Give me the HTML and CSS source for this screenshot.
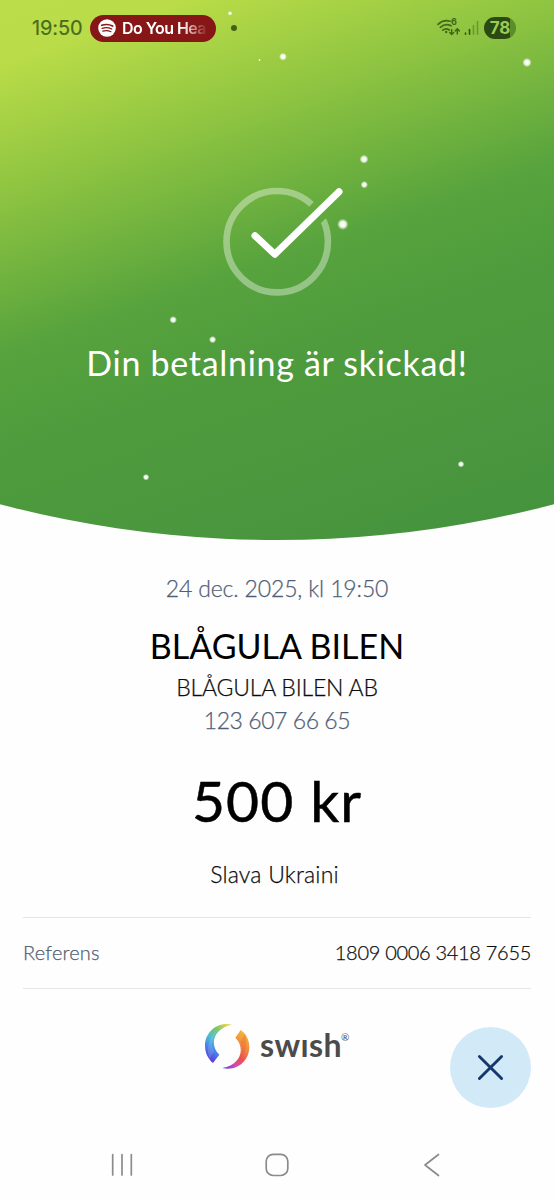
FILE: index.html
```html
<!DOCTYPE html>
<html lang="sv">
<head>
<meta charset="utf-8">
<title>Swish</title>
<link rel="stylesheet" href="styles.css">
</head>
<body>
<main class="screen">
  <section class="hero">
    <svg class="sparkles" viewBox="0 0 554 540" aria-hidden="true">
      <defs><radialGradient id="glow"><stop offset="0" stop-color="#fff"/><stop offset=".5" stop-color="#fff" stop-opacity=".9"/><stop offset="1" stop-color="#fff" stop-opacity="0"/></radialGradient></defs>
      <g fill="url(#glow)">
        <circle cx="230" cy="13.300" r="2.300"/><circle cx="259.500" cy="60" r="1.300"/><circle cx="283" cy="56.700" r="4"/>
        <circle cx="527" cy="62.500" r="4.700"/><circle cx="364" cy="159.200" r="4.500"/><circle cx="364.300" cy="184.700" r="3.700"/>
        <circle cx="342.800" cy="224.300" r="5.700"/><circle cx="173.200" cy="319.800" r="3.800"/><circle cx="212.600" cy="339.600" r="3.700"/>
        <circle cx="146" cy="477.200" r="3.300"/><circle cx="461" cy="464.200" r="3.300"/>
      </g>
    </svg>
    <header class="status">
      <span class="clock">19:50</span>
      <div class="pill">
        <svg class="spotify" viewBox="0 0 18 18"><circle cx="9" cy="9" r="8.800" fill="#fff"/><g fill="none" stroke="#8a1616" stroke-linecap="round"><path d="M3.700 6.300Q9.500 4.400 14.600 7" stroke-width="1.700"/><path d="M4.200 9.300Q9.200 7.700 13.700 10" stroke-width="1.400"/><path d="M4.700 12.100Q9 10.800 12.900 12.700" stroke-width="1.200"/></g></svg>
        <span class="track">Do You Hea</span>
      </div>
      <i class="dot"></i>
      <div class="signals">
        <svg class="wifi" viewBox="0 0 24 20"><g fill="none" stroke="#41671b" stroke-width="1.700" stroke-linecap="round"><path d="M1 6.300Q6.500 1.200 13 3.200"/><path d="M3.300 9.300Q8.500 5 14 7.800"/><path d="M5.800 12.200Q9 9.700 12.300 12"/><path d="M14.700 11.500V16.200M12.700 14.500L14.700 16.500L16.700 14.500M20.300 16V11.200M18.300 12.900L20.300 10.900L22.300 12.900" stroke-width="1.500"/></g><circle cx="9.200" cy="14" r="1.200" fill="#41671b"/></svg>
        <b class="six">6</b>
        <svg class="bars" viewBox="0 0 16 16"><g stroke-width="1.600" stroke-linecap="round"><path d="M1.500 13V14.300M5.500 9.500V14.300" stroke="#31550f"/><path d="M9.500 5.500V14.300M13.500 1.500V14.300" stroke="#31550f" opacity=".4"/></g></svg>
        <span class="battery">78</span>
      </div>
    </header>
    <svg class="check" viewBox="217 180 130 120">
      <defs><mask id="gap" maskUnits="userSpaceOnUse" x="217" y="180" width="130" height="120"><rect x="217" y="180" width="130" height="120" fill="#fff"/><path d="M274.700 253.600L346 185" stroke="#000" stroke-width="20"/></mask></defs>
      <circle cx="277.200" cy="241.700" r="50.700" fill="none" stroke="#fff" stroke-opacity=".38" stroke-width="6.600" mask="url(#gap)"/>
      <path d="M255 235.700L274.800 254.200L339 191.800" fill="none" stroke="#fff" stroke-width="7" stroke-linecap="round" stroke-linejoin="round"/>
    </svg>
    <h1 class="headline">Din betalning är skickad!</h1>
  </section>
  <section class="details">
    <p class="date">24 dec. 2025, kl 19:50</p>
    <h2 class="name">BLÅGULA BILEN</h2>
    <p class="company">BLÅGULA BILEN AB</p>
    <p class="number">123 607 66 65</p>
    <p class="amount">500 kr</p>
    <p class="message">Slava Ukraini</p>
    <div class="reference"><span class="label">Referens</span><span class="value">1809 0006 3418 7655</span></div>
  </section>
  <footer class="footer">
    <div class="brand">
      <svg class="mark" viewBox="42 38 138 138">
        <defs>
          <linearGradient id="cool" x1=".75" y1="0" x2=".25" y2="1"><stop offset="0" stop-color="#e3d24b"/><stop offset=".22" stop-color="#79c76c"/><stop offset=".5" stop-color="#4dbbd8"/><stop offset=".75" stop-color="#4a7bea"/><stop offset="1" stop-color="#5d35d8"/></linearGradient>
          <linearGradient id="warm" x1=".7" y1="0" x2=".2" y2="1"><stop offset="0" stop-color="#f3b73c"/><stop offset=".35" stop-color="#f18640"/><stop offset=".6" stop-color="#ea5350"/><stop offset=".82" stop-color="#d04bb8"/><stop offset="1" stop-color="#7a45d8"/></linearGradient>
        </defs>
        <path d="M126 43C82 32 45 65 45 106C45 127 54 145 69 158L88 133C58 105 68 54 126 43Z" fill="url(#cool)"/>
        <path d="M126 43C83 48 54 84 72 121L59 147C43 103 68 45 126 43Z" fill="#fff" opacity=".12"/>
        <path d="M97 173C141 184 178 151 178 110C178 89 169 71 152 59L136 82C166 111 155 163 97 173Z" fill="url(#warm)"/>
        <path d="M97 173C141 168 169 132 151 95L164 70C180 113 155 171 97 173Z" fill="#e5373f" opacity=".2"/>
      </svg>
      <span class="wordmark">swısh</span><sup class="reg">®</sup>
    </div>
    <button class="close" aria-label="Stäng"><svg viewBox="0 0 28 28"><path d="M2.500 2.500L25.500 25.500M25.500 2.500L2.500 25.500" stroke="#14386c" stroke-width="3" stroke-linecap="round"/></svg></button>
  </footer>
  <nav class="nav">
    <svg viewBox="0 0 24 24"><path d="M2.700 1.500V22M12 1.500V22M21.300 1.500V22"/></svg>
    <svg viewBox="0 0 24 24"><rect x="1.200" y="1.300" width="21.600" height="21.200" rx="7"/></svg>
    <svg viewBox="0 0 24 24"><path d="M18.500 1.500L5 12L18.500 22.500"/></svg>
  </nav>
</main>
</body>
</html>
```
FILE: styles.css
```css
* { box-sizing: border-box; }
body { margin: 0; background: #fefefe; font-family: Lato, "Liberation Sans", sans-serif; }
h1, h2, p { margin: 0; font-weight: 400; text-align: center; white-space: nowrap; }
svg { display: block; flex: none; }
.screen { width: 554px; height: 1200px; overflow: hidden; display: flex; flex-direction: column; }
.hero {
  position: relative; flex: none; height: 540px;
  background: linear-gradient(161deg, #bbdd4a 0, #b9dc48 62px, #8ec441 185px, #57a33d 335px, #4f9c3d 420px, #45923f 691px);
  clip-path: circle(1092px at 50% -552px);
}
.sparkles { position: absolute; inset: 0; width: 554px; height: 540px; }
.status { height: 56px; padding: 0 38px 0 32px; display: flex; align-items: center; font-family: Inter, Roboto, sans-serif; color: #4a6b1c; }
.clock { width: 58px; font-size: 20px; letter-spacing: -.1px; -webkit-text-stroke: .2px currentColor; white-space: nowrap; }
.pill { width: 126px; height: 27px; border-radius: 14px; background: #871616; display: flex; align-items: center; padding: 0 10px 0 8px; }
.spotify { width: 18px; height: 18px; margin-right: 6px; }
.track { white-space: nowrap; font-size: 16px; letter-spacing: -.55px; font-weight: 600; color: #fff; -webkit-mask-image: linear-gradient(90deg, #000 60px, transparent 86px); mask-image: linear-gradient(90deg, #000 60px, transparent 86px); }
.dot { width: 6px; height: 6px; border-radius: 50%; background: #426317; margin-left: 15px; }
.signals { margin-left: auto; display: flex; align-items: center; position: relative; }
.wifi { width: 24px; height: 20px; margin-right: 3px; }
.six { position: absolute; left: 14px; top: 0; font-size: 9px; line-height: 10px; font-weight: 700; color: #41671b; }
.bars { width: 16px; height: 16px; margin-right: 4px; }
.battery { width: 32px; height: 22px; border-radius: 11px; background: linear-gradient(90deg, #2b4a12 26px, #5a8d2b 26px); color: #9ccb57; font-size: 17px; font-weight: 700; line-height: 22px; text-align: center; }
.check { width: 130px; height: 120px; margin: 124px 0 0 217px; }
.headline { margin-top: 41px; font-size: 34px; line-height: 44px; letter-spacing: .7px; color: #fff; }
.details { flex: none; padding: 33px 23px 0; color: #0c0c0e; }
.date, .company, .number, .message, .reference { font-weight: 300; -webkit-text-stroke: .25px currentColor; }
.date { font-size: 23px; line-height: 30px; letter-spacing: -.15px; color: #525e78; }
.name { margin-top: 21px; font-size: 34px; line-height: 44px; color: #000; }
.company { margin-top: 3px; font-size: 23px; line-height: 33px; letter-spacing: -.2px; }
.number { font-size: 23px; line-height: 33px; letter-spacing: -.45px; color: #525e78; }
.amount { margin-top: 28px; font-size: 57px; line-height: 70px; letter-spacing: 1.1px; -webkit-text-stroke: .5px #000; color: #000; }
.message { margin-top: 24px; padding-right: 5px; font-size: 23px; line-height: 30px; letter-spacing: .2px; }
.reference { margin-top: 28px; height: 72px; padding-bottom: 2px; border-top: 1px solid #e6e6e6; border-bottom: 1px solid #e6e6e6; display: flex; align-items: center; justify-content: space-between; font-size: 20px; }
.label { color: #525e70; letter-spacing: .2px; }
.value { letter-spacing: -.3px; }
.footer { flex: none; height: 139px; padding: 34px 23px 0 204px; display: flex; justify-content: space-between; align-items: flex-start; }
.brand { display: flex; }
.mark { width: 46px; height: 46px; }
.wordmark { margin-left: 10px; font-size: 32px; line-height: 43px; letter-spacing: .4px; font-weight: 700; color: #4b4b4b; }
.reg { font-size: 10px; line-height: 12px; margin-top: 8px; margin-left: -1px; color: #4b4b4b; }
.close { width: 81px; height: 81px; margin-top: 4px; border: 0; border-radius: 50%; background: #d2eaf8; padding: 0 1px 1px 0; display: grid; place-items: center; }
.close svg { width: 27px; height: 27px; }
.nav { height: 72px; padding: 25px 110px 0; display: flex; justify-content: space-between; }
.nav svg { width: 24px; height: 24px; fill: none; stroke: #8b8b8b; stroke-width: 1.700; stroke-linecap: round; stroke-linejoin: round; }
```
